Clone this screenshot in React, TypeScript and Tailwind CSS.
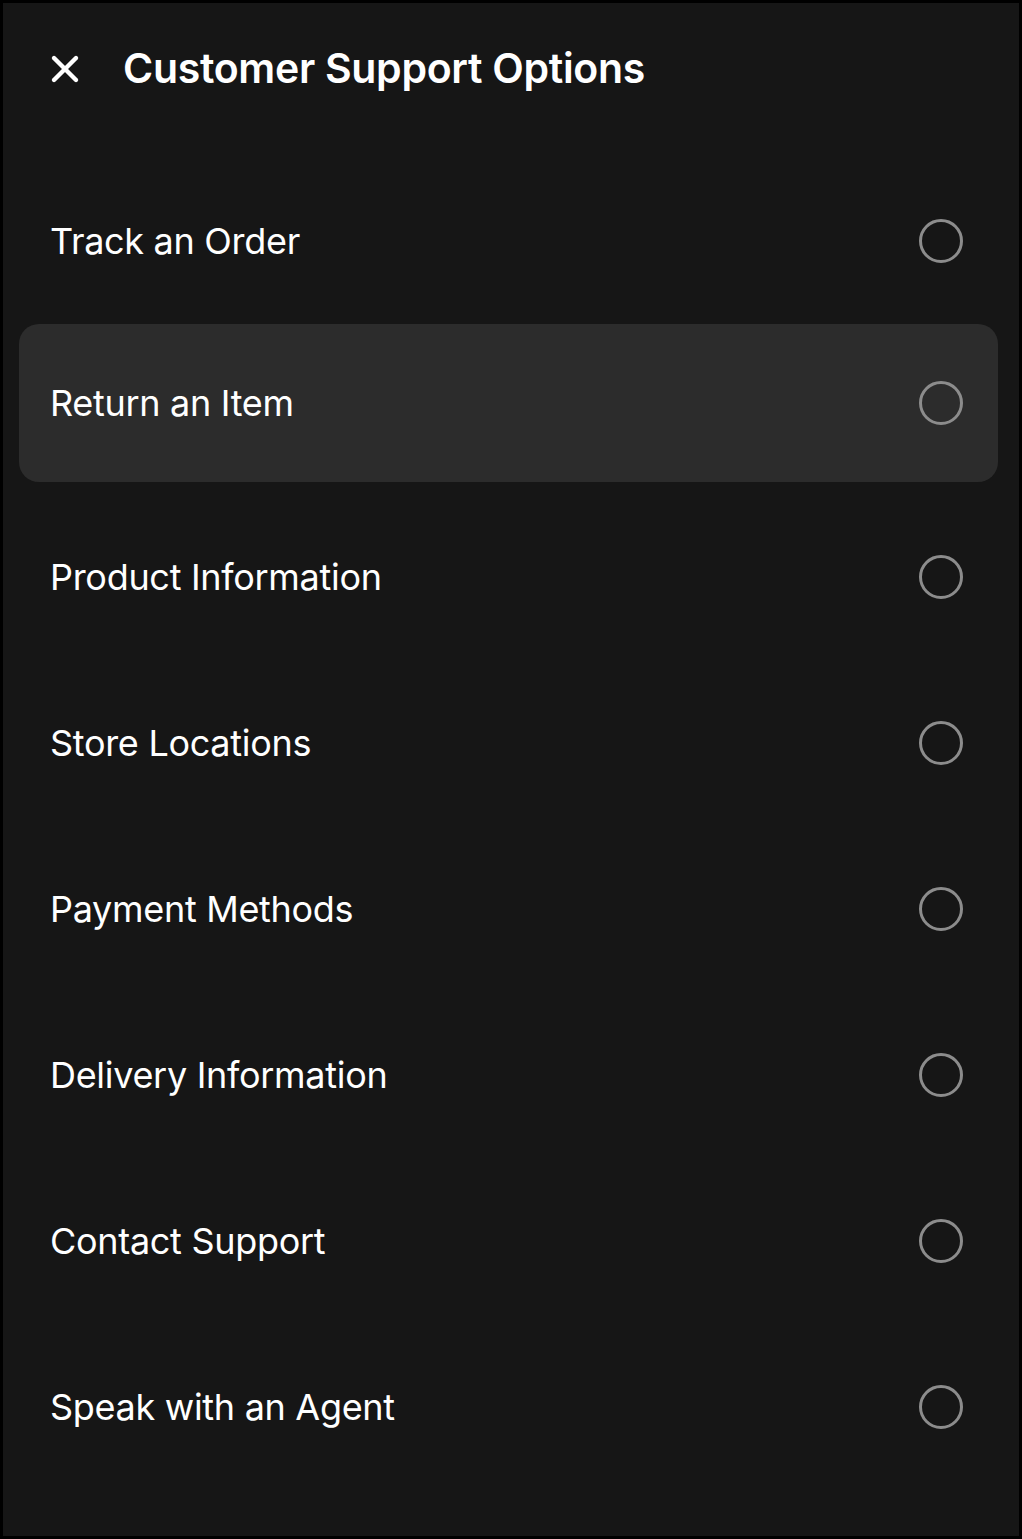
import { X } from "lucide-react";

const options = [
  "Track an Order",
  "Return an Item",
  "Product Information",
  "Store Locations",
  "Payment Methods",
  "Delivery Information",
  "Contact Support",
  "Speak with an Agent",
];

function Radio() {
  return <div className="w-[44px] h-[44px] rounded-full border-[3px] border-[#8c8c8c] shrink-0" />;
}

export default function App() {
  return (
    <div
      className="w-[1022px] h-[1539px] bg-[#161616] text-white border-[3px] border-black overflow-hidden"
      style={{ fontFamily: "Inter, 'Noto Sans', sans-serif" }}
    >
      <div className="flex items-center h-[134px] pl-[40px] pb-[2px]">
        <X size={44} strokeWidth={2.4} className="text-white" />
        <h1 className="ml-[36px] text-[41px] font-semibold tracking-[-0.3px]">Customer Support Options</h1>
      </div>
      <div className="flex flex-col pt-[21px]">
        {options.map((label, i) =>
          i === 1 ? (
            <div
              key={label}
              className="ml-[16px] mr-[21px] mb-[12px] h-[158px] rounded-[20px] bg-[#2c2c2c] flex items-center justify-between pl-[31px] pr-[35px]"
            >
              <span className="text-[36px] tracking-[-0.3px]">{label}</span>
              <Radio />
            </div>
          ) : (
            <div key={label} className="h-[166px] flex items-center justify-between pl-[47px] pr-[56px]">
              <span className="text-[36px] tracking-[-0.3px]">{label}</span>
              <Radio />
            </div>
          )
        )}
      </div>
    </div>
  );
}
